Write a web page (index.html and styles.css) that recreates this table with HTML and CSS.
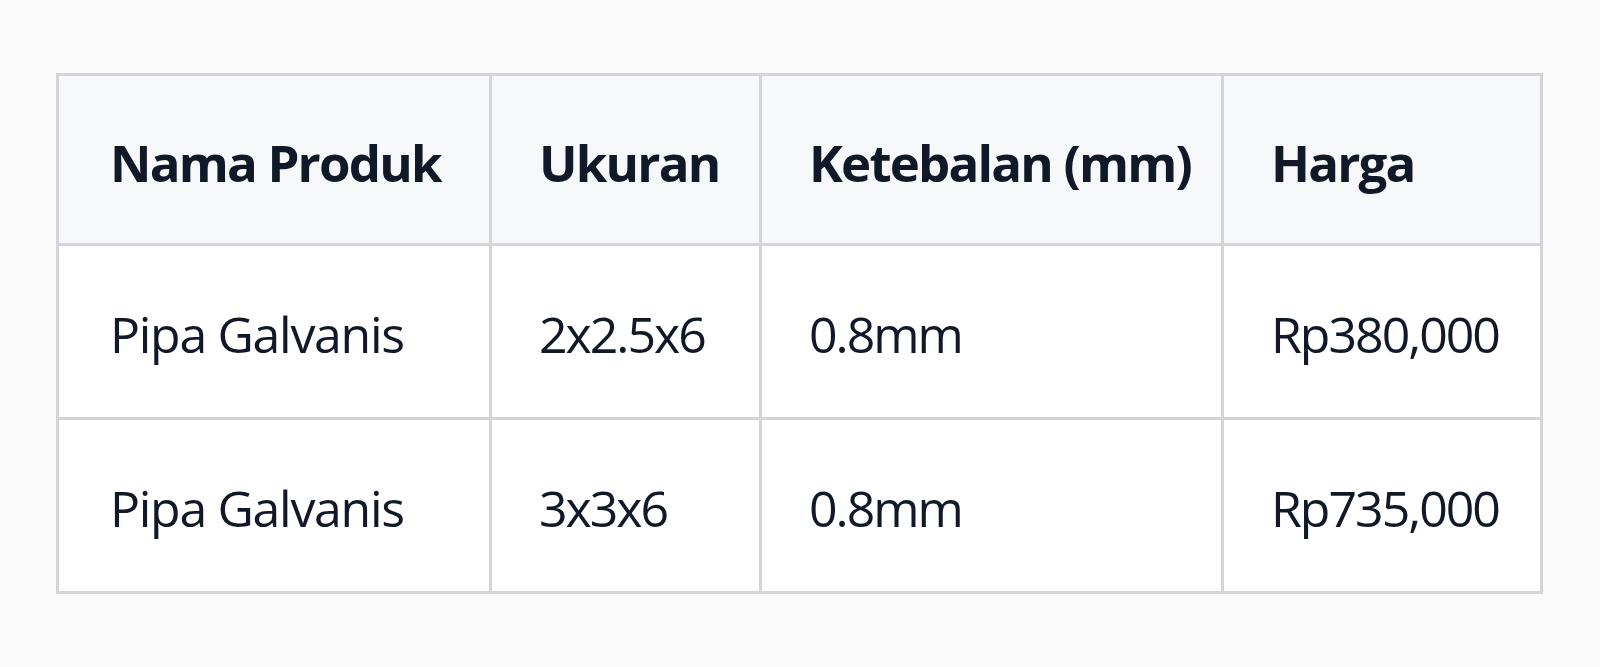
FILE: index.html
```html
<!DOCTYPE html>
<html lang="id">
<head>
<meta charset="utf-8">
<title>Daftar Harga Pipa</title>
<link rel="stylesheet" href="styles.css">
</head>
<body>
<main class="page">
  <table class="price-table">
    <colgroup>
      <col class="col-name">
      <col class="col-size">
      <col class="col-thick">
      <col class="col-price">
    </colgroup>
    <thead>
      <tr>
        <th>Nama Produk</th>
        <th>Ukuran</th>
        <th>Ketebalan (mm)</th>
        <th>Harga</th>
      </tr>
    </thead>
    <tbody>
      <tr>
        <td>Pipa Galvanis</td>
        <td class="num">2x2.5x6</td>
        <td class="num">0.8mm</td>
        <td class="num">Rp380,000</td>
      </tr>
      <tr>
        <td>Pipa Galvanis</td>
        <td class="num">3x3x6</td>
        <td class="num">0.8mm</td>
        <td class="num">Rp735,000</td>
      </tr>
    </tbody>
  </table>
</main>
</body>
</html>
```

FILE: styles.css
```css
html, body {
  margin: 0;
  padding: 0;
  background: #fafafb;
}

.page {
  padding: 73px 0 0 56px;
}

.price-table {
  border-collapse: collapse;
  width: 1484px;
  table-layout: fixed;
  font-family: "Open Sans", "Noto Sans", sans-serif;
  color: #111827;
}

.col-name { width: 433px; }
.col-size { width: 270px; }
.col-thick { width: 462px; }
.col-price { width: 319px; }

.price-table th,
.price-table td {
  border: 3px solid #d3d5db;
  text-align: left;
  padding: 0 0 0 47px;
  white-space: nowrap;
  box-sizing: border-box;
}

.price-table th:first-child,
.price-table td:first-child {
  padding-left: 51px;
}

.price-table th {
  background: #f7f8fa;
  font-weight: 700;
  font-size: 51px;
  letter-spacing: -1.8px;
  height: 170px;
  padding-top: 4px;
}

.price-table td {
  background: #ffffff;
  font-weight: 400;
  font-size: 50px;
  letter-spacing: -1.3px;
  height: 174px;
  padding-top: 4px;
}

.price-table td.num {
  letter-spacing: -2px;
}
```
